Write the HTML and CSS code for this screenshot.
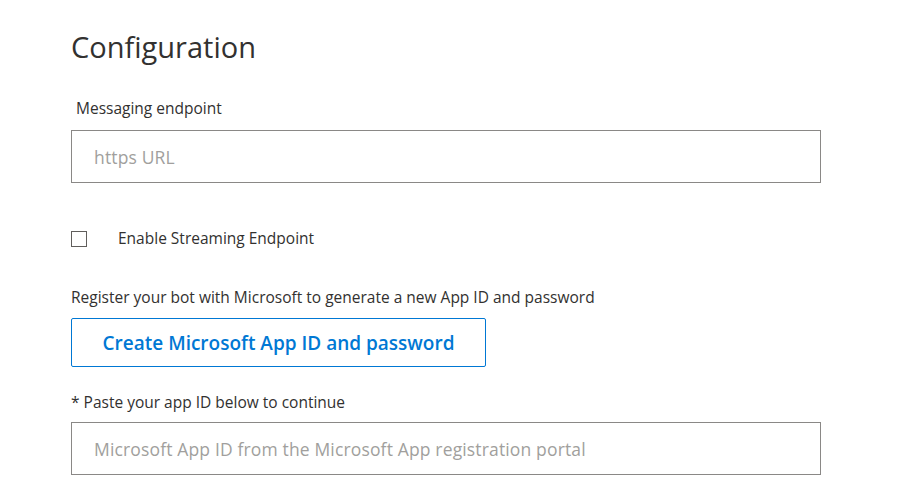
FILE: index.html
```html
<!DOCTYPE html>
<html lang="en">
<head>
<meta charset="utf-8">
<title>Configuration</title>
<link rel="stylesheet" href="styles.css">
</head>
<body>
<main class="page">
  <h1 class="title">Configuration</h1>
  <label class="field-label indent" for="endpoint">Messaging endpoint</label>
  <input class="text-input first" id="endpoint" type="text" placeholder="https URL">
  <div class="check-row">
    <span class="checkbox"></span>
    <span class="check-label">Enable Streaming Endpoint</span>
  </div>
  <p class="note">Register your bot with Microsoft to generate a new App ID and password</p>
  <button class="btn" type="button">Create Microsoft App ID and password</button>
  <label class="field-label paste" for="appid">* Paste your app ID below to continue</label>
  <input class="text-input second" id="appid" type="text" placeholder="Microsoft App ID from the Microsoft App registration portal">
</main>
</body>
</html>
```
FILE: styles.css
```css
html, body {
  margin: 0;
  padding: 0;
  background: #ffffff;
}
body {
  font-family: "Open Sans", "Noto Sans", "Liberation Sans", sans-serif;
  color: #323130;
}
.page {
  display: flex;
  flex-direction: column;
  align-items: flex-start;
  padding: 0 0 0 71px;
}
.title {
  margin: 29px 0 0 0;
  font-size: 29px;
  font-weight: 400;
  line-height: 36px;
  color: #323130;
}
.field-label {
  display: block;
  font-size: 15.5px;
  line-height: 20px;
  color: #323130;
}
.indent {
  margin: 33px 0 0 5px;
}
.text-input {
  box-sizing: border-box;
  width: 750px;
  height: 53px;
  padding: 0 22px;
  border: 1px solid #8a8886;
  border-radius: 0;
  font-family: inherit;
  font-size: 17.5px;
  letter-spacing: 0.15px;
  color: #323130;
  outline: none;
}
.text-input.first {
  margin: 12px 0 0 0;
}
.text-input.second {
  margin: 10px 0 0 0;
}
.text-input::placeholder {
  color: #a19f9d;
}
.check-row {
  display: flex;
  align-items: center;
  height: 20px;
  margin-top: 45px;
}
.checkbox {
  box-sizing: border-box;
  width: 16px;
  height: 16px;
  margin-top: 1px;
  border: 1px solid #605e5c;
}
.check-label {
  margin-left: 31px;
  font-size: 15.5px;
  line-height: 20px;
}
.note {
  margin: 39px 0 0 0;
  font-size: 15.5px;
  line-height: 20px;
}
.btn {
  box-sizing: border-box;
  width: 415px;
  height: 49px;
  margin-top: 11px;
  padding: 0;
  border: 1px solid #0078d4;
  border-radius: 2px;
  background: #ffffff;
  color: #0078d4;
  font-family: inherit;
  font-size: 19px;
  font-weight: 600;
}
.paste {
  margin: 25px 0 0 0;
}
```
